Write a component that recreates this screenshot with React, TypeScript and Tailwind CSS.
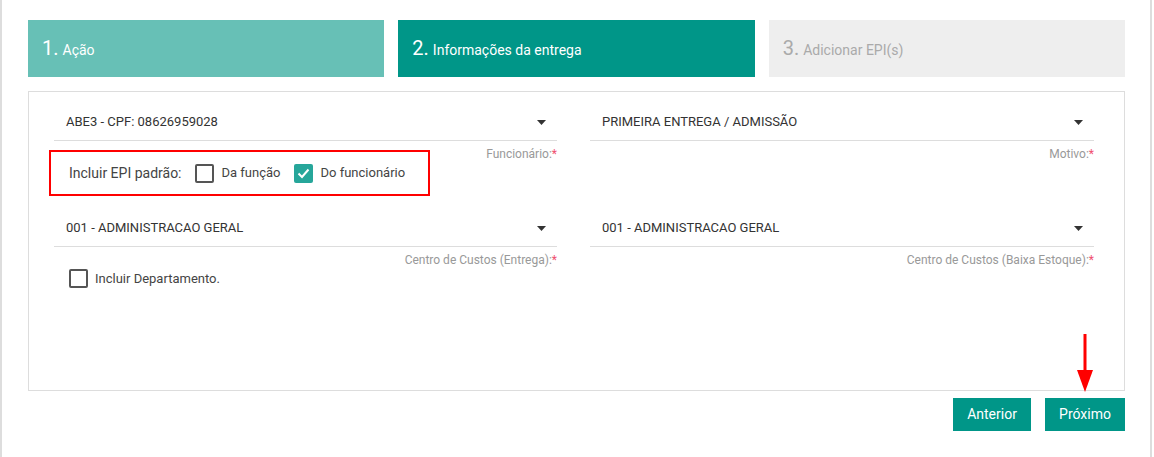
import React from 'react';

const Caret: React.FC = () => (
  <svg width="9" height="5" viewBox="0 0 9 5" className="shrink-0">
    <path d="M0 0h9L4.5 5z" fill="#333" />
  </svg>
);

const SelectField: React.FC<{ value: string; label: string }> = ({ value, label }) => (
  <div className="relative">
    <div className="flex h-[37px] items-center justify-between border-b border-[#dddddd] pl-3 pr-[11px] text-[13px] text-[#333]">
      <span>{value}</span>
      <Caret />
    </div>
    <div className="absolute right-0 top-full mt-[5px] text-[12px] leading-[16px] text-[#999]">
      {label}
      <span className="text-[#f0506e]">*</span>
    </div>
  </div>
);

const Box: React.FC<{ checked?: boolean }> = ({ checked }) =>
  checked ? (
    <span className="flex h-[19px] w-[19px] shrink-0 items-center justify-center rounded-[2px] bg-[#26a69a]">
      <svg width="13" height="11" viewBox="0 0 13 11" fill="none">
        <path d="M1.5 5.5l3.5 3.5 6.5-7.5" stroke="white" strokeWidth="2" />
      </svg>
    </span>
  ) : (
    <span className="block h-[19px] w-[19px] shrink-0 rounded-[2px] border-2 border-[#555]" />
  );

const App: React.FC = () => {
  const tabs = [
    { n: '1.', t: 'Ação', cls: 'bg-[#67c0b6] text-white' },
    { n: '2.', t: 'Informações da entrega', cls: 'bg-[#009688] text-white' },
    { n: '3.', t: 'Adicionar EPI(s)', cls: 'bg-[#eeeeee] text-[#aaaaaa]' },
  ];

  return (
    <div className="h-[457px] w-[1152px] border-x-2 border-[#dddddd] bg-white pl-[26px] pr-[25px] pt-[20px]" style={{ fontFamily: 'Roboto, "Liberation Sans", sans-serif' }}>
      {/* steps */}
      <div className="grid grid-cols-3 gap-[14px]">
        {tabs.map((tab) => (
          <div key={tab.n} className={`flex h-[57px] items-baseline pl-[14px] pt-[16px] ${tab.cls}`}>
            <span className="text-[20px] leading-[24px]">{tab.n}</span>
            <span className="ml-[4px] text-[14px]">{tab.t}</span>
          </div>
        ))}
      </div>

      {/* form panel */}
      <div className="mt-[14px] h-[300px] border border-[#dddddd] pl-[25px] pr-[30px] pt-[12px]">
        <div className="grid grid-cols-[503px_1fr] gap-x-[33px]">
          <SelectField value="ABE3 - CPF: 08626959028" label="Funcionário:" />
          <SelectField value="PRIMEIRA ENTREGA / ADMISSÃO" label="Motivo:" />

          <div className="-ml-[5px] mt-[9px] flex h-[46px] w-[381px] items-center border-2 border-[#ff0000] pl-[18px] text-[13px] text-[#444]">
            <span className="text-[14px]">Incluir EPI padrão:</span>
            <span className="ml-[13px]"><Box /></span>
            <span className="ml-[8px]">Da função</span>
            <span className="ml-[13px]"><Box checked /></span>
            <span className="ml-[8px]">Do funcionário</span>
          </div>
          <div />

          <div className="mt-[14px]">
            <SelectField value="001 - ADMINISTRACAO GERAL" label="Centro de Custos (Entrega):" />
          </div>
          <div className="mt-[14px]">
            <SelectField value="001 - ADMINISTRACAO GERAL" label="Centro de Custos (Baixa Estoque):" />
          </div>

          <label className="ml-[15px] mt-[22px] flex items-center text-[13px] text-[#444]">
            <Box />
            <span className="ml-[7px]">Incluir Departamento.</span>
          </label>
        </div>
      </div>

      {/* actions */}
      <div className="relative mt-[7px] flex justify-end gap-[14px]">
        <button className="h-[33px] w-[78px] bg-[#009688] text-[14px] text-white">Anterior</button>
        <button className="relative h-[33px] w-[80px] bg-[#009688] text-[14px] text-white">
          Próximo
          <svg className="absolute -top-[64px] left-[31px]" width="18" height="60" viewBox="0 0 18 60">
            <rect x="7.5" y="0" width="3" height="38" fill="#ff0000" />
            <path d="M1 36h16L9 58z" fill="#ff0000" />
          </svg>
        </button>
      </div>
    </div>
  );
};

export default App;
